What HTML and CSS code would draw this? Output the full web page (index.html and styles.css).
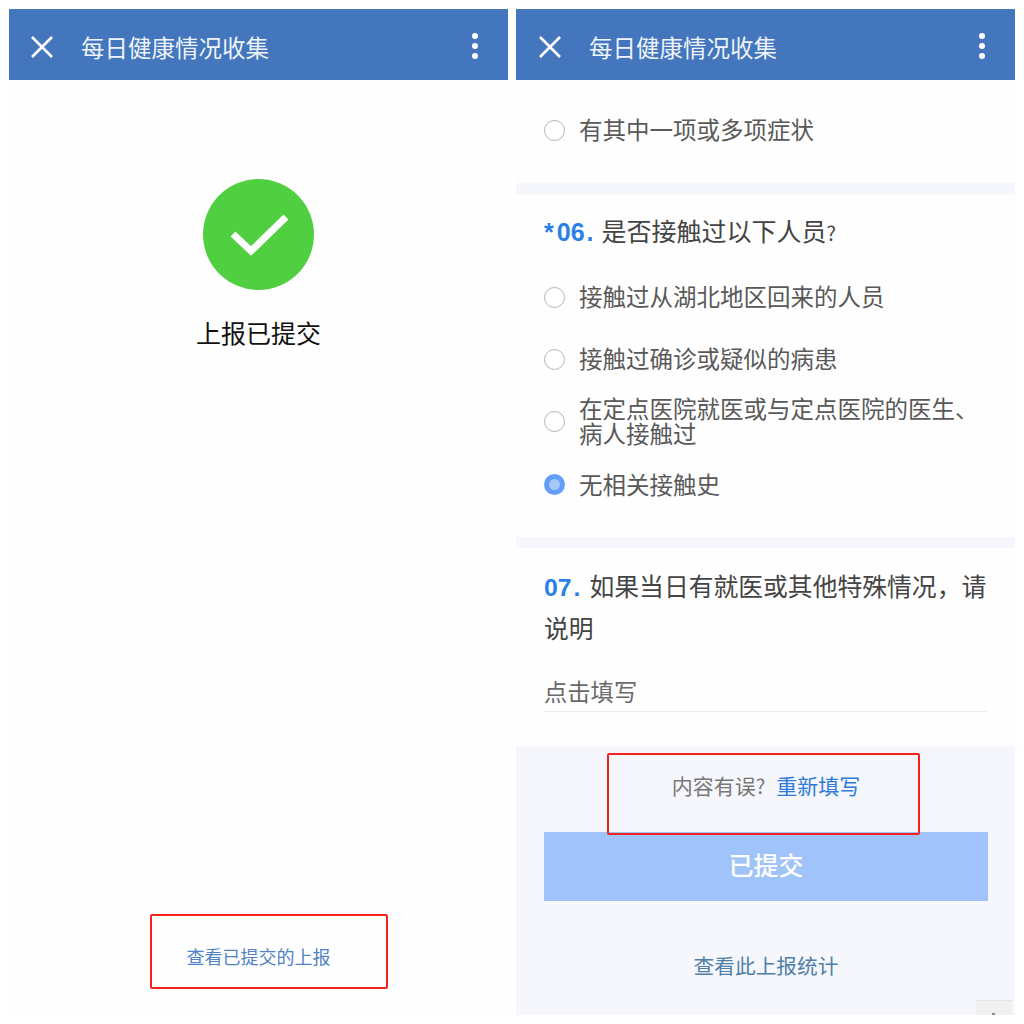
FILE: index.html
```html
<!DOCTYPE html>
<html lang="zh-CN">
  <head>
    <meta charset="UTF-8" />
    <title>每日健康情况收集</title>
    <link rel="stylesheet" href="styles.css">
  </head>
  <body>
    <div class="screens">
      <section class="phone">
        <header class="topbar">
          <svg class="close" viewBox="0 0 22 22"><path d="M1 1L21 21M21 1L1 21" /></svg>
          <h1>每日健康情况收集</h1>
          <div class="more"><i></i><i></i><i></i></div>
        </header>
        <div class="done">
          <svg class="tick" viewBox="0 0 111 111">
            <circle cx="55.5" cy="55.5" r="55.5" fill="#50cf41" />
            <path d="M30 55L48 72L83 38" fill="none" stroke="#fff" stroke-width="7" />
          </svg>
          <p>上报已提交</p>
        </div>
        <div class="viewLink">
          <a>查看已提交的上报</a>
          <span class="mark markLeft"></span>
        </div>
      </section>

      <section class="phone rightPhone">
        <header class="topbar">
          <svg class="close" viewBox="0 0 22 22"><path d="M1 1L21 21M21 1L1 21" /></svg>
          <h1>每日健康情况收集</h1>
          <div class="more"><i></i><i></i><i></i></div>
        </header>

        <div class="block firstBlock">
          <label class="option"><span class="radio"></span>有其中一项或多项症状</label>
        </div>

        <div class="block q6">
          <h2><b><em>*</em>06<i>.</i></b>是否接触过以下人员<small>?</small></h2>
          <label class="option"><span class="radio"></span>接触过从湖北地区回来的人员</label>
          <label class="option"><span class="radio"></span>接触过确诊或疑似的病患</label>
          <label class="option"><span class="radio"></span><span class="twoLine">在定点医院就医或与定点医院的医生、<br>病人接触过</span></label>
          <label class="option"><span class="radio checked"></span>无相关接触史</label>
        </div>

        <div class="block q7">
          <h2><b>07<i>.</i></b>如果当日有就医或其他特殊情况，请说明</h2>
          <div class="fill">点击填写</div>
        </div>

        <footer class="actions">
          <p class="retry">内容有误<small>?</small><a>重新填写</a></p>
          <button class="submitted">已提交</button>
          <a class="stats">查看此上报统计</a>
          <span class="mark markRight"></span>
          <span class="toTop"></span>
        </footer>
      </section>
    </div>
  </body>
</html>
```

FILE: styles.css
```css
* {
  box-sizing: border-box;
}

body {
  margin: 0;
  background-color: #fff;
  font-family: "Noto Sans CJK SC", "Liberation Sans", sans-serif;
}

.screens {
  display: grid;
  grid-template-columns: 499px 499px;
  gap: 8px;
  height: 1024px;
  padding: 9px;
}

.phone {
  display: flex;
  flex-direction: column;
  height: 1006px;
  background-color: #fefefe;
}

.topbar {
  display: flex;
  align-items: center;
  flex: none;
  height: 71px;
  padding: 0 30px 0 22px;
  background-color: #4376bc;
  color: #eef3fa;
}

.rightPhone .topbar {
  padding-left: 23px;
}

.close {
  width: 22px;
  height: 22px;
  margin-top: 4px;
  fill: none;
  stroke: #fff;
  stroke-width: 2.6;
}

.topbar h1 {
  flex: 1;
  margin: 0 0 0 28px;
  padding-top: 6px;
  font-size: 23.5px;
  font-weight: 400;
  line-height: 65px;
}

.more {
  display: flex;
  flex-direction: column;
  gap: 4px;
  margin-top: 2px;
}

.more i {
  width: 6px;
  height: 6px;
  border-radius: 50%;
  background-color: #fff;
}

/* left screen */
.done {
  display: flex;
  flex-direction: column;
  align-items: center;
  padding-top: 99px;
}

.tick {
  width: 111px;
  height: 111px;
}

.done p {
  margin: 24px 0 0;
  font-size: 25px;
  line-height: 36px;
  color: #111;
}

.viewLink {
  position: relative;
  margin-top: auto;
  padding-bottom: 46px;
  text-align: center;
  font-size: 18px;
  line-height: 26px;
  color: #4f83c4;
}

.mark {
  position: absolute;
  border: 2px solid #f5221d;
  border-radius: 2px;
}

.markLeft {
  left: 141px;
  top: -29px;
  width: 238px;
  height: 75px;
}

/* right screen */
.block {
  border-bottom: 11px solid #f5f7fc;
  padding: 0 27px 0 28px;
}

.firstBlock {
  height: 114px;
  padding-top: 29px;
}

.option {
  display: flex;
  align-items: center;
  font-size: 23.5px;
  line-height: 40px;
  color: #595959;
}

.radio {
  flex: none;
  width: 21px;
  height: 21px;
  margin: 2px 14px 0 0;
  border: 1.5px solid #b4b4b4;
  border-radius: 50%;
  background-color: #fff;
}

.radio.checked {
  border: 5px solid #639ef8;
  background-color: #a9c8f8;
}

.twoLine {
  line-height: 24.5px;
}

.block h2 {
  margin: 0;
  font-size: 25px;
  font-weight: 400;
  color: #444;
}

.block h2 b {
  margin-right: 3px;
  font-family: "Liberation Sans", sans-serif;
  font-weight: 700;
  line-height: 1;
  color: #2a7fe8;
}

.block h2 em {
  margin-right: 3px;
  font-style: normal;
}

.block h2 i {
  margin: 0 6px 0 2px;
  font-style: normal;
}

.block small {
  font-size: 20px;
}

.q6 {
  height: 354px;
  padding-top: 16px;
}

.q6 h2 {
  margin-bottom: 23px;
  line-height: 40px;
}

.q6 h2 b {
  margin-right: 2px;
}

.q6 .option {
  margin-bottom: 22px;
}

.q6 .option:nth-of-type(2) {
  margin-bottom: 18px;
}

.q6 .option:nth-of-type(3) {
  margin-bottom: 18.5px;
  height: 49px;
}

.q7 {
  flex: 1;
  border-bottom: 0;
  padding-top: 16px;
}

.q7 h2 {
  margin-right: -6px;
  font-size: 24.8px;
  line-height: 42px;
}

.fill {
  margin-top: 25px;
  padding-bottom: 2px;
  border-bottom: 1px solid #eceef2;
  font-size: 23.3px;
  line-height: 36px;
  color: #6a6a6a;
}

.actions {
  position: relative;
  flex: none;
  height: 269px;
  padding: 0 27px 0 28px;
  background-color: #f5f7fc;
  text-align: center;
}

.retry {
  height: 56px;
  margin: 0;
  padding-top: 24px;
  font-size: 21px;
  line-height: 30px;
  color: #777;
}

.retry small {
  font-size: 20px;
}

.retry a {
  margin-left: 11px;
  color: #2e7ad9;
}

.submitted {
  display: block;
  width: 100%;
  height: 69px;
  margin-top: 30px;
  padding-bottom: 6px;
  border: none;
  background-color: #a0c4f9;
  color: #fff;
  font-family: inherit;
  font-size: 25px;
  font-weight: 500;
}

.stats {
  display: block;
  margin-top: 49px;
  font-size: 20.7px;
  line-height: 30px;
  color: #4f7fa8;
}

.markRight {
  left: 91px;
  top: 7px;
  width: 313px;
  height: 82px;
}

.toTop {
  position: absolute;
  right: 3px;
  bottom: 0;
  width: 36px;
  height: 15px;
  background-color: #f0f0f0;
  border-top: 1px solid #e4e4e4;
}

.toTop::after {
  content: "";
  position: absolute;
  left: 16px;
  bottom: 0;
  width: 3px;
  height: 2px;
  background-color: #888;
}
```
